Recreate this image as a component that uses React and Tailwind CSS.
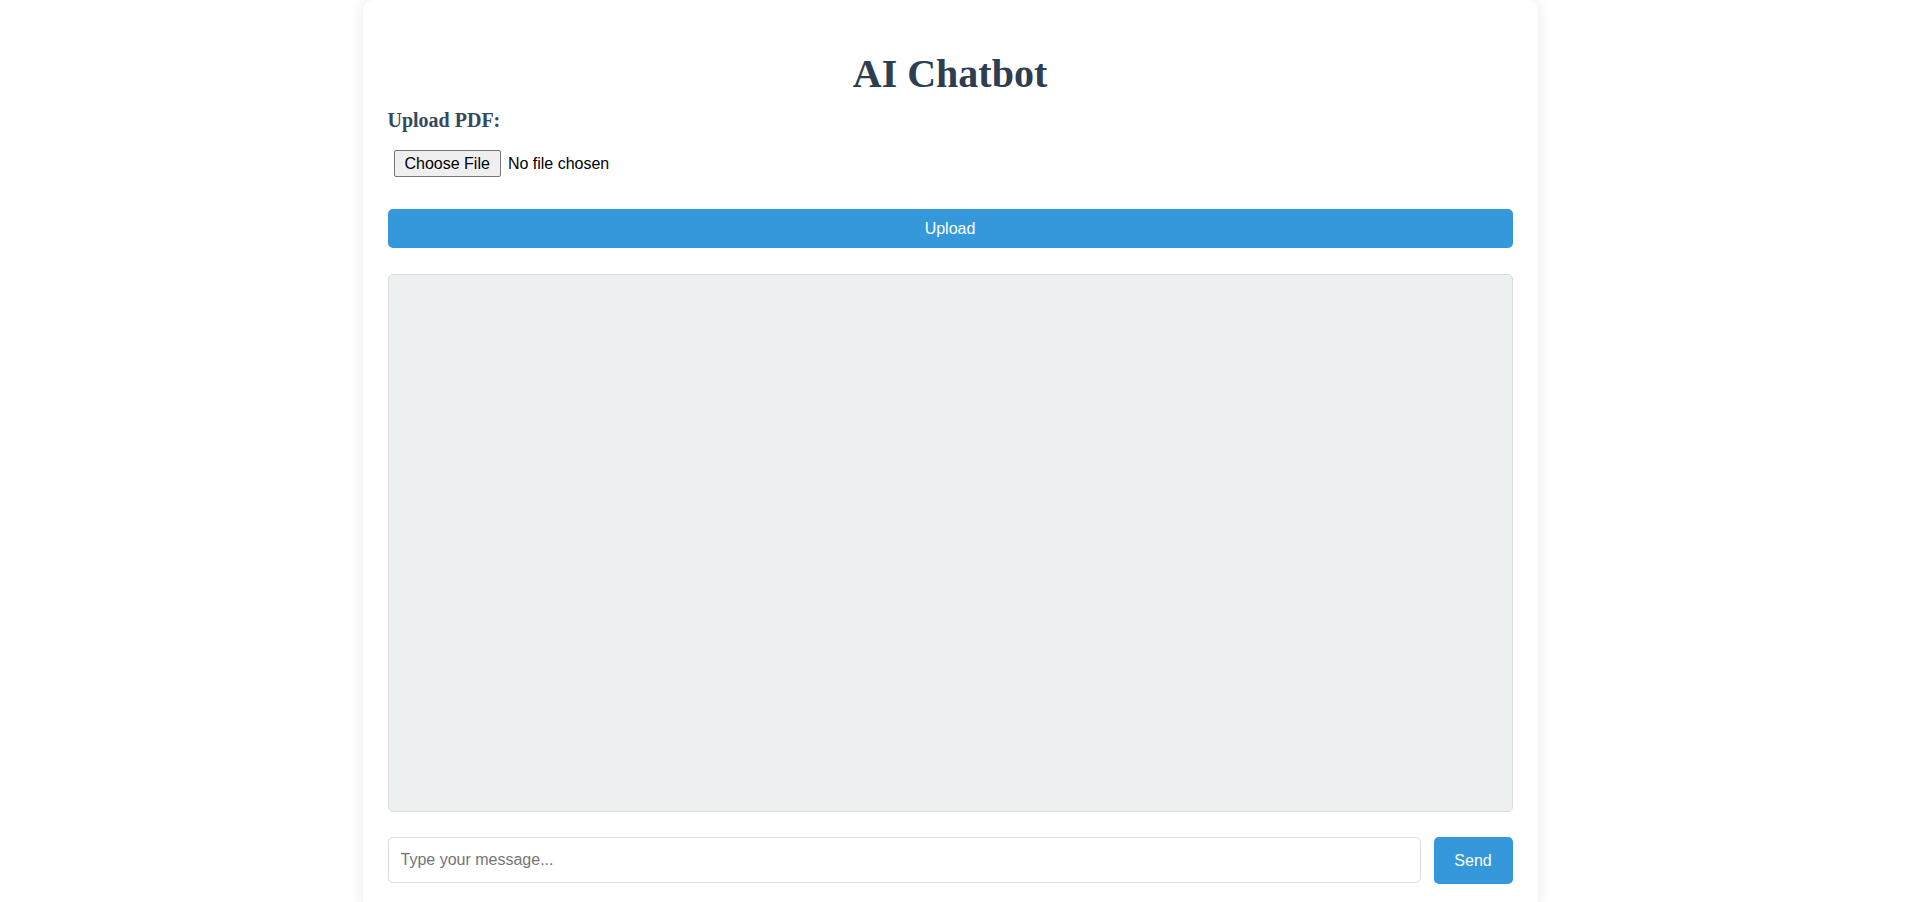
export default function App() {
  return (
    <div className="h-[902px] overflow-hidden bg-white flex justify-center items-start pr-[10px]">
      {/* Chat card */}
      <div className="w-[1175px] bg-white rounded-[10px] shadow-[0_0_15px_rgba(0,0,0,0.09)] px-[25px] pt-[52px] pb-[25px]">
        <h1 className="text-center text-[40px] leading-[44px] font-bold text-[#2c3e50] font-['Liberation_Serif','Times_New_Roman',serif]">
          AI Chatbot
        </h1>

        {/* Upload section */}
        <label className="block mt-[13px] text-[20px] leading-[22px] font-bold text-[#34495e] font-['Liberation_Serif','Times_New_Roman',serif]">
          Upload PDF:
        </label>
        <input
          type="file"
          accept="application/pdf"
          className="block mt-[14px] h-[37px] py-[5px] pl-[6px] pr-[5px] text-[16px] leading-[26px] text-black font-['Liberation_Sans',Arial,sans-serif] file:h-[27px] file:px-[10px] file:mr-[7px] file:border file:border-solid file:border-[#767676] file:rounded-[2px] file:bg-[#efefef] file:text-black"
        />
        <button className="block mt-[27px] w-full h-[39px] rounded-[5px] bg-[#3498db] text-white text-[16px] font-['Liberation_Sans',Arial,sans-serif]">
          Upload
        </button>

        {/* Messages */}
        <div className="mt-[26px] h-[538px] bg-[#ecf0f1] border border-[#dadcdd] rounded-[5px]" />

        {/* Message input */}
        <div className="mt-[25px] flex items-start gap-[13px]">
          <input
            type="text"
            placeholder="Type your message..."
            className="flex-1 h-[46px] px-[12px] border border-[#dddddd] rounded-[5px] text-[16px] text-black placeholder:text-[#757575] outline-none font-['Liberation_Sans',Arial,sans-serif]"
          />
          <button className="w-[79px] h-[47px] rounded-[5px] bg-[#3498db] text-white text-[16px] font-['Liberation_Sans',Arial,sans-serif]">
            Send
          </button>
        </div>
      </div>
    </div>
  );
}
